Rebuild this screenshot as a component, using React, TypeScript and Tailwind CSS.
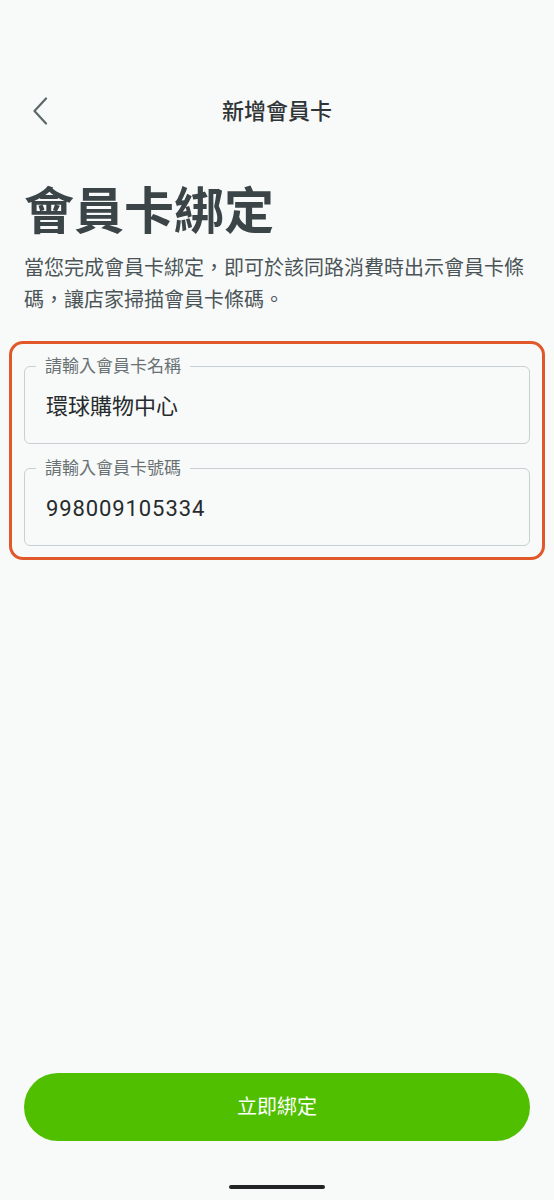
const font = "font-['Roboto','Noto_Sans_CJK_TC',sans-serif]";

function OutlinedField({
  label,
  value,
  numeric,
}: {
  label: string;
  value: string;
  numeric?: boolean;
}) {
  return (
    <fieldset className="rounded-[6px] border-[1.5px] border-[#c9d0d3]">
      <legend className="ml-[11px] px-[9px] text-[17px] leading-[20px] text-[#687173]">
        {label}
      </legend>
      <div
        className={`px-[21px] pt-[17px] pb-[22px] text-[22px] leading-[28px] text-[#262b2d] ${
          numeric ? "tracking-[0.9px]" : ""
        }`}
      >
        {value}
      </div>
    </fieldset>
  );
}

export default function App() {
  return (
    <main className={`${font} flex h-[1200px] w-full flex-col bg-[#f8f9f9] px-6`}>
      <header className="mt-[83px] grid h-14 grid-cols-[1fr_auto_1fr] items-center">
        <button className="ml-[9px] flex h-8 w-8 items-center">
          <svg width="15" height="28" viewBox="0 0 15 28" fill="none">
            <polyline
              points="13,1.5 1.5,14 13,26.5"
              stroke="#5d686a"
              strokeWidth="2.2"
              strokeLinecap="round"
              strokeLinejoin="round"
            />
          </svg>
        </button>
        <h1 className="text-[22px] font-medium text-[#2f3537]">新增會員卡</h1>
        <div />
      </header>

      <h2 className="mt-[43px] text-[50px] font-bold leading-[60px] text-[#3b4547]">
        會員卡綁定
      </h2>
      <p className="mt-[10px] text-[20px] leading-[32px] text-[#4b5557]">
        當您完成會員卡綁定，即可於該同路消費時出示會員卡條碼，讓店家掃描會員卡條碼。
      </p>

      <section className="-mx-[15px] mt-[25px] flex flex-col gap-[14px] rounded-[14px] border-[3px] border-[#e1592a] px-3 pt-3 pb-[11px]">
        <OutlinedField label="請輸入會員卡名稱" value="環球購物中心" />
        <OutlinedField label="請輸入會員卡號碼" value="998009105334" numeric />
      </section>

      <div className="flex-1" />

      <button className="flex h-[68px] w-full items-center justify-center rounded-full bg-[#50bf00] text-[20px] font-normal text-white">
        立即綁定
      </button>

      <div className="mt-[44px] mb-[11px] flex justify-center">
        <div className="h-[4px] w-[96px] rounded-full bg-[#222426]" />
      </div>
    </main>
  );
}
